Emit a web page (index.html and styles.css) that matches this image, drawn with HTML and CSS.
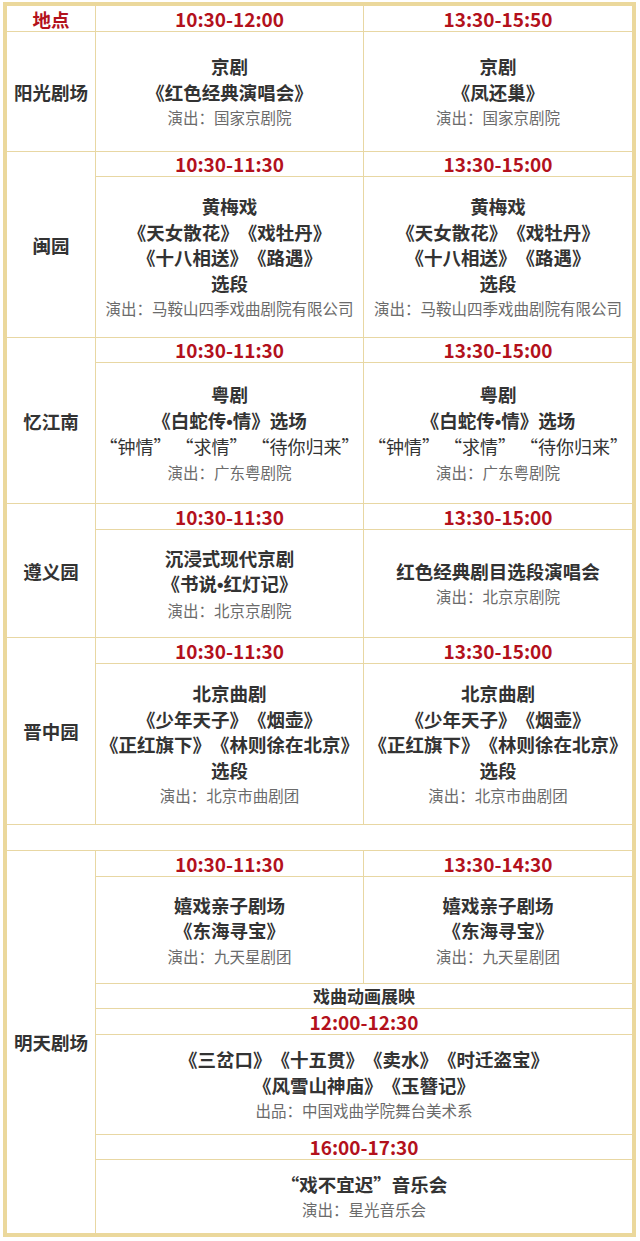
FILE: index.html
```html
<!DOCTYPE html>
<html lang="zh-CN">
<head>
<meta charset="utf-8">
<title>演出安排</title>
<link rel="stylesheet" href="styles.css">
</head>
<body>
<table class="sched">
  <colgroup>
    <col class="c-venue">
    <col class="c-slot">
    <col class="c-slot">
  </colgroup>
  <tbody>
    <tr class="r-head">
      <td class="head">地点</td>
      <td class="time">10:30-12:00</td>
      <td class="time end">13:30-15:50</td>
    </tr>
    <tr class="r-yg">
      <td class="venue">阳光剧场</td>
      <td class="show"><div class="b">京剧</div><div class="b">《红色经典演唱会》</div><div class="sub">演出：国家京剧院</div></td>
      <td class="show end"><div class="b">京剧</div><div class="b">《凤还巢》</div><div class="sub">演出：国家京剧院</div></td>
    </tr>

    <tr class="r-t25">
      <td class="venue" rowspan="2">闽园</td>
      <td class="time">10:30-11:30</td>
      <td class="time end">13:30-15:00</td>
    </tr>
    <tr class="r-my">
      <td class="show"><div class="b">黄梅戏</div><div class="b">《天女散花》《戏牡丹》</div><div class="b">《十八相送》《路遇》</div><div class="b">选段</div><div class="sub">演出：马鞍山四季戏曲剧院有限公司</div></td>
      <td class="show end"><div class="b">黄梅戏</div><div class="b">《天女散花》《戏牡丹》</div><div class="b">《十八相送》《路遇》</div><div class="b">选段</div><div class="sub">演出：马鞍山四季戏曲剧院有限公司</div></td>
    </tr>

    <tr class="r-t25">
      <td class="venue" rowspan="2">忆江南</td>
      <td class="time">10:30-11:30</td>
      <td class="time end">13:30-15:00</td>
    </tr>
    <tr class="r-yjn">
      <td class="show"><div class="b">粤剧</div><div class="b">《白蛇传<span class="dot">•</span>情》选场</div><div class="q">“钟情” “求情” “待你归来”</div><div class="sub">演出：广东粤剧院</div></td>
      <td class="show end"><div class="b">粤剧</div><div class="b">《白蛇传<span class="dot">•</span>情》选场</div><div class="q">“钟情” “求情” “待你归来”</div><div class="sub">演出：广东粤剧院</div></td>
    </tr>

    <tr class="r-t26">
      <td class="venue" rowspan="2">遵义园</td>
      <td class="time">10:30-11:30</td>
      <td class="time end">13:30-15:00</td>
    </tr>
    <tr class="r-zy">
      <td class="show"><div class="b">沉浸式现代京剧</div><div class="b">《书说<span class="dot">•</span>红灯记》</div><div class="sub">演出：北京京剧院</div></td>
      <td class="show end"><div class="b">红色经典剧目选段演唱会</div><div class="sub">演出：北京京剧院</div></td>
    </tr>

    <tr class="r-t26">
      <td class="venue" rowspan="2">晋中园</td>
      <td class="time">10:30-11:30</td>
      <td class="time end">13:30-15:00</td>
    </tr>
    <tr class="r-jz">
      <td class="show"><div class="b">北京曲剧</div><div class="b">《少年天子》《烟壶》</div><div class="b">《正红旗下》《林则徐在北京》</div><div class="b">选段</div><div class="sub">演出：北京市曲剧团</div></td>
      <td class="show end"><div class="b">北京曲剧</div><div class="b">《少年天子》《烟壶》</div><div class="b">《正红旗下》《林则徐在北京》</div><div class="b">选段</div><div class="sub">演出：北京市曲剧团</div></td>
    </tr>

    <tr class="r-t26">
      <td class="blank end" colspan="3"></td>
    </tr>

    <tr class="r-t26">
      <td class="venue last" rowspan="7">明天剧场</td>
      <td class="time">10:30-11:30</td>
      <td class="time end">13:30-14:30</td>
    </tr>
    <tr class="r-mt1">
      <td class="show"><div class="b">嬉戏亲子剧场</div><div class="b">《东海寻宝》</div><div class="sub">演出：九天星剧团</div></td>
      <td class="show end"><div class="b">嬉戏亲子剧场</div><div class="b">《东海寻宝》</div><div class="sub">演出：九天星剧团</div></td>
    </tr>
    <tr class="r-t25">
      <td class="label end" colspan="2">戏曲动画展映</td>
    </tr>
    <tr class="r-t26">
      <td class="time end" colspan="2">12:00-12:30</td>
    </tr>
    <tr class="r-mt2">
      <td class="show end" colspan="2"><div class="b">《三岔口》《十五贯》《卖水》《时迁盗宝》</div><div class="b">《风雪山神庙》《玉簪记》</div><div class="sub">出品：中国戏曲学院舞台美术系</div></td>
    </tr>
    <tr class="r-t25">
      <td class="time end" colspan="2">16:00-17:30</td>
    </tr>
    <tr class="r-mt3">
      <td class="show end last" colspan="2"><div class="b">“戏不宜迟”音乐会</div><div class="sub">演出：星光音乐会</div></td>
    </tr>
  </tbody>
</table>
</body>
</html>
```

FILE: styles.css
```css
html, body {
  margin: 0;
  padding: 0;
  background: #ffffff;
}

body {
  font-family: "Noto Sans CJK SC", "Noto Sans", sans-serif;
  color: #333333;
  text-spacing-trim: space-all;
}

.sched {
  margin: 2px 0 0 3px;
  width: 633px;
  border: 4px solid #ebd89c;
  border-spacing: 0;
  table-layout: fixed;
}

.c-venue { width: 89px; }
.c-slot { width: 268px; }

.sched td {
  padding: 0;
  border-right: 1px solid #e8d7a3;
  border-bottom: 1px solid #e8d7a3;
  text-align: center;
  vertical-align: middle;
}

.sched td.end { border-right: none; }
.sched td.last { border-bottom: none; }

.r-head { height: 26px; }
.r-yg { height: 120px; }
.r-t25 { height: 25px; }
.r-t26 { height: 26px; }
.r-my { height: 161px; }
.r-yjn { height: 141px; }
.r-zy { height: 108px; }
.r-jz { height: 161px; }
.r-mt1 { height: 107px; }
.r-mt2 { height: 100px; }
.r-mt3 { height: 73px; }

.head {
  color: #b3111c;
  font-size: 18.5px;
  font-weight: 700;
  line-height: 24px;
}

.time {
  color: #b3111c;
  font-size: 19px;
  font-weight: 700;
  line-height: 24px;
}

.venue {
  font-size: 18.5px;
  font-weight: 700;
  line-height: 24px;
  color: #333333;
}

.label {
  font-size: 17px;
  font-weight: 700;
  line-height: 24px;
  color: #333333;
}

.show .b {
  font-size: 18.5px;
  font-weight: 700;
  line-height: 25.5px;
  color: #333333;
}

.show .q {
  font-size: 18px;
  font-weight: 400;
  line-height: 25.5px;
  color: #333333;
}

.show .sub {
  font-size: 15.5px;
  line-height: 24px;
  color: #6b6b6b;
}

.dot {
  font-family: "Liberation Sans", sans-serif;
}
```
